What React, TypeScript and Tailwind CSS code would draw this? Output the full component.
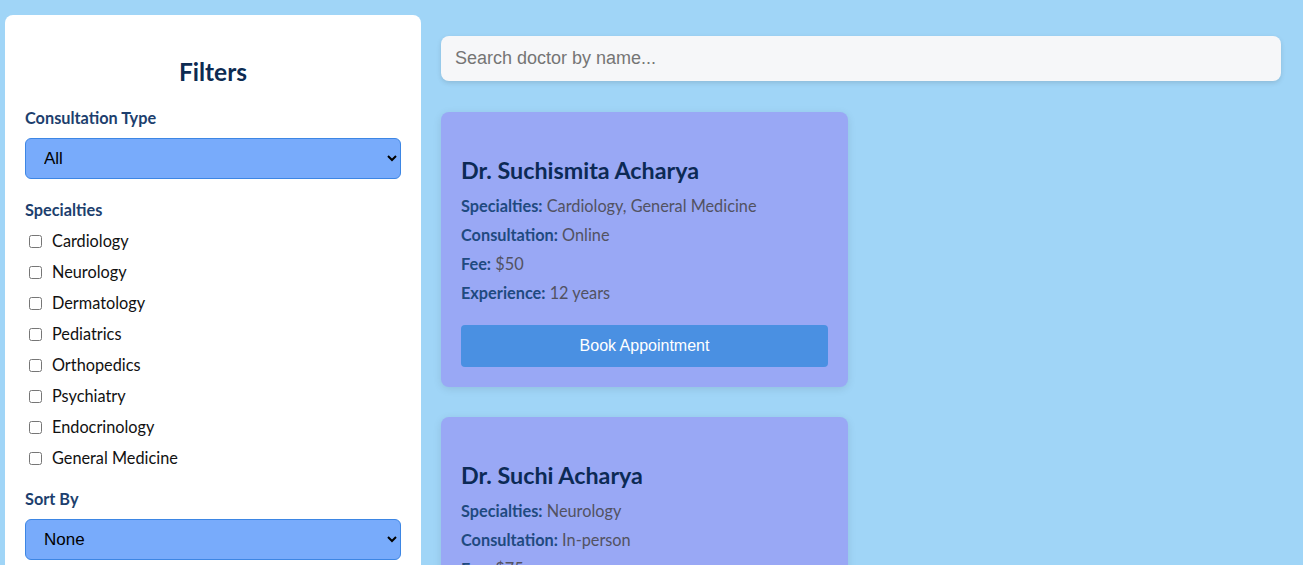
import React from "react";

type Doctor = {
  name: string;
  specialties: string[];
  consultation: string;
  fee: number;
  experience: number;
};

const doctors: Doctor[] = [
  {
    name: "Dr. Suchismita Acharya",
    specialties: ["Cardiology", "General Medicine"],
    consultation: "Online",
    fee: 50,
    experience: 12,
  },
  {
    name: "Dr. Suchi Acharya",
    specialties: ["Neurology"],
    consultation: "In-person",
    fee: 75,
    experience: 8,
  },
];

const specialties = [
  "Cardiology",
  "Neurology",
  "Dermatology",
  "Pediatrics",
  "Orthopedics",
  "Psychiatry",
  "Endocrinology",
  "General Medicine",
];

function Sidebar() {
  return (
    <aside className="w-[416px] shrink-0 self-start rounded-lg bg-white p-5">
      <h2 className="mt-[21px] mb-[19px] text-center text-[24.5px] leading-8 font-bold text-[#0d2b52]">
        Filters
      </h2>

      <div className="mb-5">
        <p className="mb-[9px] text-[16.3px] leading-[22px] font-bold text-[#1d3f6e]">
          Consultation Type
        </p>
        <select className="h-[41px] w-full rounded-md border border-[#3d86e4] bg-[#78abfb] pl-[14px] pr-2 font-['Liberation_Sans',Arial,sans-serif] text-[17px] text-black">
          <option>All</option>
          <option>Online</option>
          <option>In-person</option>
        </select>
      </div>

      <div className="mb-[19px]">
        <p className="mb-[9px] text-[16.3px] leading-[22px] font-bold text-[#1d3f6e]">
          Specialties
        </p>
        {specialties.map((s, i) => (
          <label
            key={s}
            className={`flex h-[22px] items-center text-[16.3px] text-[#111] ${
              i === specialties.length - 1 ? "" : "mb-[9px]"
            }`}
          >
            <input type="checkbox" className="mr-[10px] ml-1 h-[13px] w-[13px]" />
            {s}
          </label>
        ))}
      </div>

      <div>
        <p className="mb-[9px] text-[16.3px] leading-[22px] font-bold text-[#1d3f6e]">
          Sort By
        </p>
        <select className="h-[41px] w-full rounded-md border border-[#3d86e4] bg-[#78abfb] pl-[14px] pr-2 font-['Liberation_Sans',Arial,sans-serif] text-[17px] text-black">
          <option>None</option>
          <option>Fee</option>
          <option>Experience</option>
        </select>
      </div>
    </aside>
  );
}

function DoctorCard({ doctor }: { doctor: Doctor }) {
  return (
    <div className="w-[407px] rounded-lg bg-[#99a8f5] p-5 shadow-[0_2px_8px_rgba(0,0,0,0.1)]">
      <h3 className="mt-[23px] mb-[10px] text-[23.3px] leading-[30px] font-bold text-[#0c2a55]">
        {doctor.name}
      </h3>
      <p className="mb-[7px] text-[16.3px] leading-[22px] text-[#525262]">
        <span className="font-bold text-[#1f4a80]">Specialties:</span>{" "}
        {doctor.specialties.join(", ")}
      </p>
      <p className="mb-[7px] text-[16.3px] leading-[22px] text-[#525262]">
        <span className="font-bold text-[#1f4a80]">Consultation:</span>{" "}
        {doctor.consultation}
      </p>
      <p className="mb-[7px] text-[16.3px] leading-[22px] text-[#525262]">
        <span className="font-bold text-[#1f4a80]">Fee:</span> ${doctor.fee}
      </p>
      <p className="text-[16.3px] leading-[22px] text-[#525262]">
        <span className="font-bold text-[#1f4a80]">Experience:</span>{" "}
        {doctor.experience} years
      </p>
      <button className="mt-[21px] h-[42px] w-full rounded bg-[#4a90e2] font-['Liberation_Sans',Arial,sans-serif] text-[16px] text-white">
        Book Appointment
      </button>
    </div>
  );
}

export default function App() {
  return (
    <div className="flex min-h-[565px] gap-5 bg-[#a0d5f7] pt-[15px] pl-[5px] pr-[22px] font-['Lato',sans-serif]">
      <Sidebar />
      <main className="flex-1 pt-[21px]">
        <input
          placeholder="Search doctor by name..."
          className="h-[45px] w-full rounded-lg bg-[#f6f7f9] px-[14px] font-['Liberation_Sans',Arial,sans-serif] text-[18px] text-black shadow-[0_2px_5px_rgba(0,0,0,0.12)] outline-none placeholder:text-[#757575]"
        />
        <div className="mt-[31px] flex flex-col gap-[30px]">
          {doctors.map((d) => (
            <DoctorCard key={d.name} doctor={d} />
          ))}
        </div>
      </main>
    </div>
  );
}
